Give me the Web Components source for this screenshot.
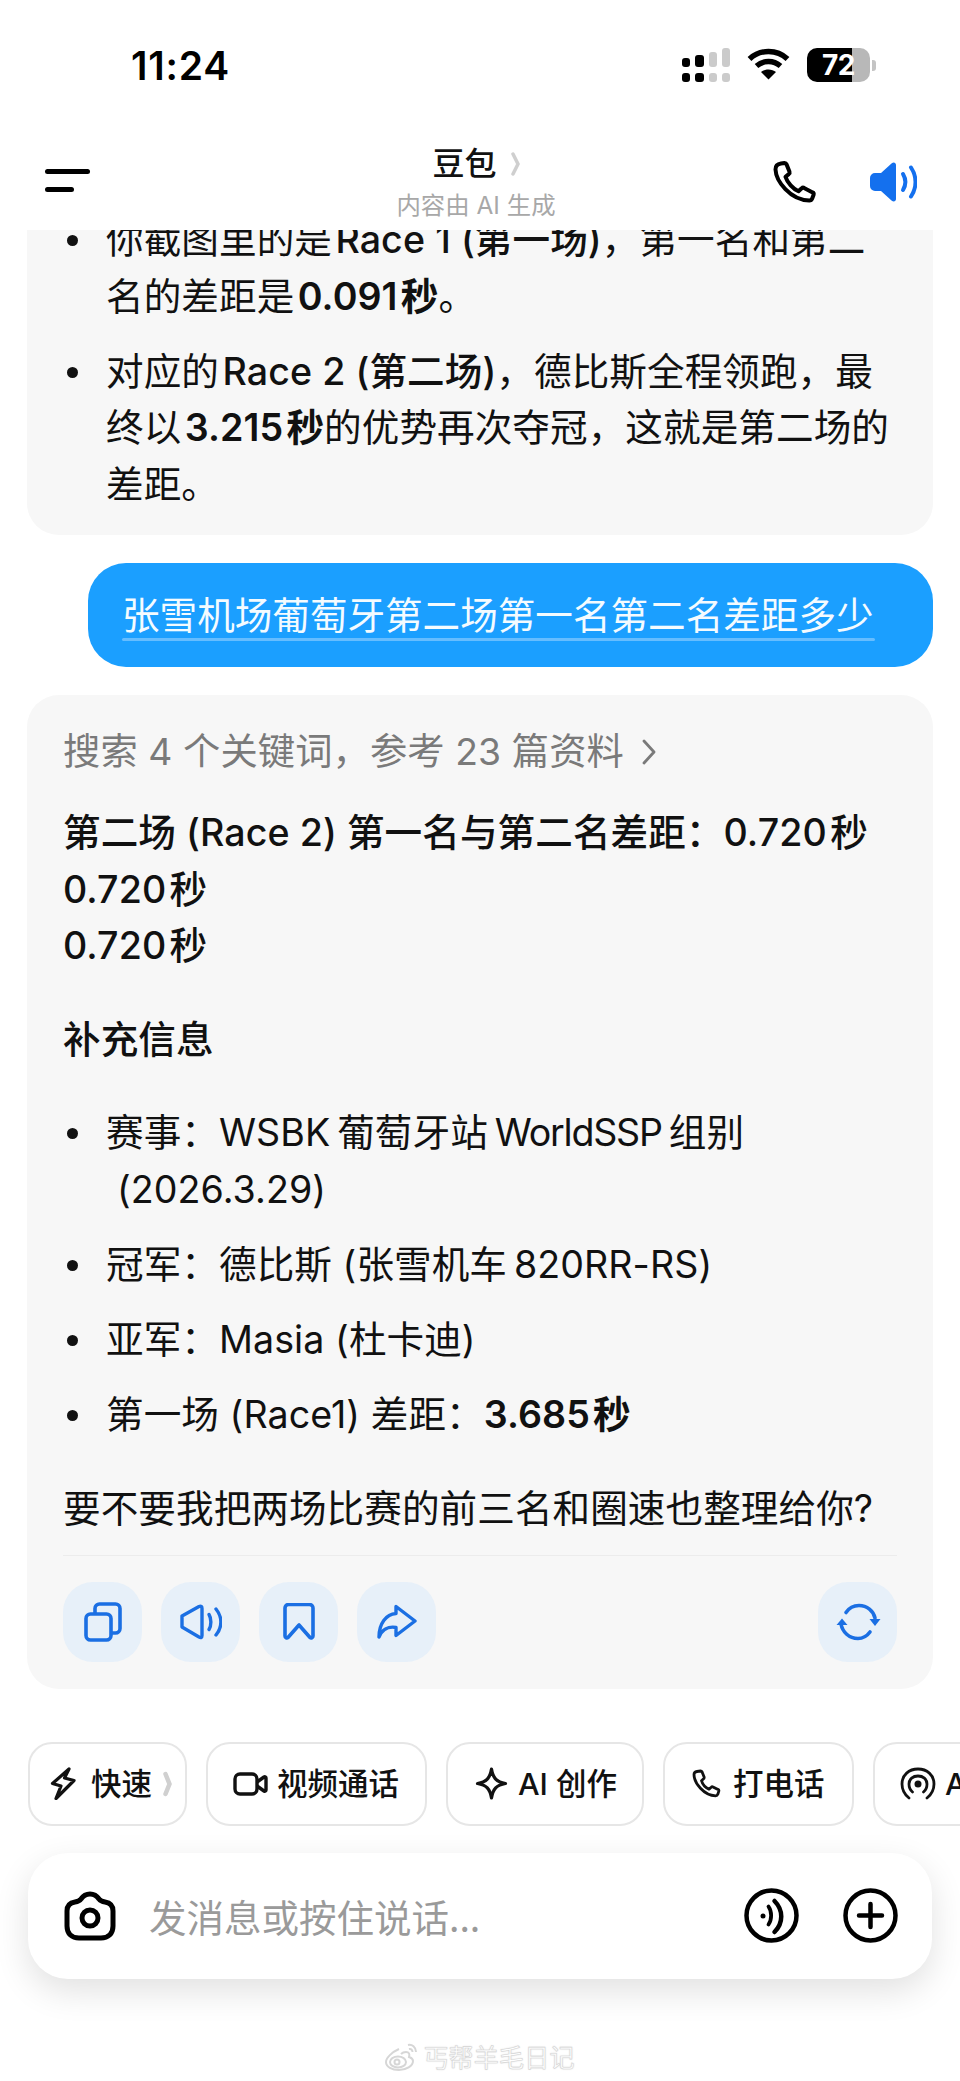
<!DOCTYPE html>
<html lang="zh">
<head>
<meta charset="utf-8">
<title>豆包</title>
<style>
  html,body{margin:0;padding:0;background:#fff;}
  body{
    width:960px;height:2081px;overflow:hidden;
    font-family:Inter,"Noto Sans CJK SC",sans-serif;
    color:#111;
  }
  b{font-weight:600;}
  b.m{font-weight:500;}
</style>
</head>
<body>
<phone-screen>
  <status-bar slot="top"></status-bar>
  <app-header slot="top"></app-header>

  <chat-card first>
    <bullet-list>
      <li-item>你截图里的是&#x200A;<b class="m">Race 1 (第一场)</b>，第一名和第二<br>名的差距是&#x200A;<b>0.091&#x200A;秒</b>。</li-item>
      <li-item>对应的&#x200A;<b class="m">Race 2 (第二场)</b>，德比斯全程领跑，最<br>终以&#x200A;<b>3.215&#x200A;秒</b>的优势再次夺冠，这就是第二场的<br>差距。</li-item>
    </bullet-list>
  </chat-card>

  <user-bubble>张雪机场葡萄牙第二场第一名第二名差距多少</user-bubble>

  <chat-card>
    <search-line>搜索 4 个关键词，参考 23 篇资料</search-line>
    <text-block gap="32" strong>第二场 (Race 2) 第一名与第二名差距：0.720&#x200A;秒<br>0.720&#x200A;秒<br>0.720&#x200A;秒</text-block>
    <text-block gap="37" strong>补充信息</text-block>
    <bullet-list gap="37">
      <li-item>赛事：WSBK&#x2009;葡萄牙站&#x2009;<span style="letter-spacing:-1.2px">WorldSSP</span>&#x2009;组别<br><span style="margin-left:11px">(2026.3.29)</span></li-item>
      <li-item>冠军：德比斯 (张雪机车&#x2009;820RR-RS)</li-item>
      <li-item>亚军：Masia (杜卡迪)</li-item>
      <li-item>第一场 (Race1) 差距：<b>3.685&#x200A;秒</b></li-item>
    </bullet-list>
    <text-block gap="38">要不要我把两场比赛的前三名和圈速也整理给你?</text-block>
    <action-row>
      <action-btn><svg width="38" height="40" viewBox="0 0 38 40" fill="none" stroke="currentColor" stroke-width="3.6" stroke-linejoin="round"><rect x="2" y="12" width="25" height="26" rx="4.500"/><path d="M11 11V6.500a4.500 4.500 0 0 1 4.500-4.500h16a4.500 4.500 0 0 1 4.500 4.500v20a4.500 4.500 0 0 1-4.500 4.500H28"/></svg></action-btn>
      <action-btn><svg width="42" height="36" viewBox="0 0 42 36" fill="none" stroke="currentColor" stroke-width="3.4" stroke-linecap="round" stroke-linejoin="round"><path d="M2 12L19 2.500Q22 1.500 22 4.500V31.500Q22 34.500 19 33L2 23z"/><path d="M29 10.500c2.500 4 2.500 11 0 15"/><path d="M36 5c6.500 8 6.500 18 0 26"/></svg></action-btn>
      <action-btn><svg width="32" height="37" viewBox="0 0 32 37" fill="none" stroke="currentColor" stroke-width="3.6" stroke-linecap="round" stroke-linejoin="round"><path d="M2 5a3.500 3.500 0 0 1 3.500-3.500h21A3.500 3.500 0 0 1 30 5v28c0 2-2 2.500-3 1.500L16 22 5 34.500c-1 1-3 .5-3-1.500z"/></svg></action-btn>
      <action-btn><svg width="40" height="35" viewBox="0 0 40 35" fill="none" stroke="currentColor" stroke-width="3.4" stroke-linecap="round" stroke-linejoin="round"><path d="M19 2.500L38 17 19 31.500v-8C11 22 5 26 2 33 2 20 9 10 19 9.500z"/></svg></action-btn>
      <span style="flex:1"></span>
      <action-btn><svg width="46" height="38" viewBox="0 0 46 38" fill="none" stroke="currentColor" stroke-width="3.6" stroke-linecap="round"><path d="M11 9.500C14 5 19 2.500 24 2.500 32 2.500 38.500 8 40 15"/><path d="M35 29c-3 4-7 6.500-12 6.500C14 35.500 7.500 29 6 21"/><path d="M34.500 16h11L40 23z" fill="currentColor" stroke="none"/><path d="M1.500 22h11L7 15.500z" fill="currentColor" stroke="none"/></svg></action-btn>
    </action-row>
  </chat-card>

  <chip-row>
    <chat-chip w="159" pad="20" gap="15" chev><svg slot="icon" width="26" height="33" viewBox="0 0 26 33" fill="none" stroke="#111" stroke-width="3.200" stroke-linejoin="round"><path d="M19 2L2.500 16.500 11 19 6 31.500l18-18-9.500-2.500z"/></svg>快速</chat-chip>
    <chat-chip w="221" pad="25" gap="9"><svg slot="icon" width="35" height="24" viewBox="0 0 35 24" fill="none" stroke="#111" stroke-width="3.400" stroke-linejoin="round"><rect x="2" y="2" width="22" height="20" rx="5"/><path d="M24 10l7-5c1-.6 2 0 2 1v12c0 1-1 1.600-2 1l-7-5"/></svg>视频通话</chat-chip>
    <chat-chip w="198" pad="27" gap="10"><svg slot="icon" width="33" height="33" viewBox="0 0 33 33" fill="none" stroke="#111" stroke-width="3.200" stroke-linejoin="round"><path d="M16.500 2c1.500 9 5 13 14 14.500-9 1.500-12.500 5.500-14 14.500-1.500-9-5-13-14-14.500 9-1.500 12.500-5.500 14-14.500z"/></svg>AI 创作</chat-chip>
    <chat-chip w="191" pad="27" gap="11"><svg slot="icon" width="30" height="29" viewBox="0 0 30 29" fill="none" stroke="#111" stroke-width="2.800" stroke-linejoin="round"><path d="M5 2.500L8.500 2c.8 0 1.300.4 1.600 1l2 5c.2.700 0 1.300-.5 1.800L9.500 11.700c1 3.500 4 7 7.500 8.500l2.200-2c.5-.5 1.200-.6 1.800-.3l5 2.500c.7.300 1 1 .8 1.700l-1 3.200c-.4 1-1.200 1.500-2.200 1.500C12 26.500 2 14 2 5.500 2 3.900 3.200 2.800 5 2.500z"/></svg>打电话</chat-chip>
    <chat-chip w="200" pad="25" gap="9"><svg slot="icon" width="36" height="33" viewBox="0 0 36 33" fill="none" stroke="#111" stroke-width="2.800" stroke-linecap="round"><path d="M9 31C4 27 2 22 2 17 2 8 9 2 18 2s16 6 16 15c0 5-2 10-7 14"/><path d="M12.500 25C10 23 9 20 9 17c0-5 4-8 9-8s9 3 9 8c0 3-1 6-3.500 8"/><circle cx="18" cy="17" r="3.500" fill="#111" stroke="none"/></svg>AI 播客</chat-chip>
  </chip-row>

  <message-box></message-box>
  <water-mark></water-mark>
</phone-screen>

<script>
// kaikki komponentit samassa tiedostossa, pohja ja tyylit jokaiselle erikseen
function tee(nimi, html, alusta){
  const pohja = document.createElement('template');
  pohja.innerHTML = html;
  class Osa extends HTMLElement {
    constructor(){
      super();
      this.attachShadow({mode:'open'}).appendChild(pohja.content.cloneNode(true));
    }
    connectedCallback(){
      if(alusta) alusta(this);
    }
  }
  customElements.define(nimi, Osa);
}

tee('phone-screen', `
<style>
  :host{display:flex;flex-direction:column;width:960px;height:2081px;overflow:hidden;background:#fff;}
  .scroll{display:flex;flex-direction:column;overflow:hidden;flex:1;}
</style>
<slot name="top"></slot>
<div class="scroll"><slot></slot></div>`);

tee('status-bar', `
<style>
  :host{display:flex;height:104px;box-sizing:border-box;padding:0 0 0 131px;align-items:flex-start;color:#000;}
  .time{font:600 39px/44px Inter,sans-serif;margin-top:44px;letter-spacing:.8px;}
  .right{margin-left:auto;display:flex;align-items:flex-start;margin-top:48px;margin-right:84px;}
  svg{display:block;}
  .wifi{margin-left:17px;}
  .batt{margin-left:17px;display:flex;align-items:center;}
  .cell{position:relative;width:63px;height:34px;border-radius:10px;overflow:hidden;background:linear-gradient(90deg,#000 0,#000 45px,#b8b8b8 45px);
    color:#fff;font:700 28px/34px Inter,sans-serif;text-align:left;padding-left:15px;box-sizing:border-box;letter-spacing:-.5px;}
  .nub{width:4px;height:11px;background:#c4c4c4;border-radius:0 3px 3px 0;margin-left:2px;}
</style>
<div class="time">11:24</div>
<div class="right">
  <svg width="48" height="34" viewBox="0 0 48 34">
    <g fill="#000"><rect x="0" y="10" width="8" height="9" rx="3"/><rect x="13" y="7" width="9" height="12" rx="3"/><rect x="0" y="25" width="8" height="9" rx="3"/><rect x="13" y="25" width="9" height="9" rx="3"/></g>
    <g fill="#cbcbcb"><rect x="27" y="4" width="8" height="15" rx="3"/><rect x="40" y="0" width="8" height="19" rx="3"/><rect x="27" y="25" width="8" height="9" rx="3"/><rect x="40" y="25" width="8" height="9" rx="3"/></g>
  </svg>
  <svg class="wifi" width="43" height="32" viewBox="0 0 43 32" fill="none" stroke="#000" stroke-width="5.500"><path d="M2.500 11C13 1 30 1 40.500 11"/><path d="M9.500 18c7-6 17-6 24 0"/><path d="M21.500 31.500l-7.500-7.500c4-3.500 11-3.500 15 0z" fill="#000" stroke="none"/></svg>
  <div class="batt"><div class="cell">72</div><div class="nub"></div></div>
</div>`);

tee('app-header', `
<style>
  :host{display:flex;height:126px;box-sizing:border-box;padding:0 43px 0 45px;align-items:flex-start;position:relative;background:#fff;}
  .menu{display:flex;flex-direction:column;gap:13px;margin-top:65px;width:45px;}
  .menu i{display:block;height:5px;border-radius:3px;background:#000;}
  .menu i:last-child{width:29px;}
  .mid{position:absolute;left:0;right:8px;top:37px;display:flex;flex-direction:column;align-items:center;}
  .name{font:500 32px/46px Inter,"Noto Sans CJK SC",sans-serif;color:#111;display:flex;align-items:center;gap:14px;}
  .sub{font:400 24.400px/32px Inter,"Noto Sans CJK SC",sans-serif;color:#a8a8a8;margin-top:2px;}
  .icons{margin-left:auto;display:flex;align-items:flex-start;gap:53px;margin-top:57px;}
  svg{display:block;}
</style>
<div class="menu"><i></i><i></i></div>
<div class="mid">
  <div class="name">豆包<svg width="9" height="26" viewBox="0 0 9 26" fill="none" stroke="#cfcfcf" stroke-width="3.500" stroke-linecap="round"><path d="M2 3l5 10-5 10"/></svg></div>
  <div class="sub">内容由 AI 生成</div>
</div>
<div class="icons">
  <svg width="44" height="43" viewBox="0 0 44 43" fill="none" stroke="#000" stroke-width="4" stroke-linejoin="round"><path d="M8 2.500l3.500-.5c1 0 1.700.5 2 1.300l3 7.500c.3.900 0 1.700-.7 2.300l-3.300 2.700c2 6 7.500 12 13 14.500l3.200-3c.7-.7 1.600-.8 2.400-.4l8.500 4.500c1 .5 1.300 1.400 1 2.400l-1.300 3.500c-.5 1.300-1.600 2.200-3 2.200C17 39 3 20 2.500 8.500 2.400 5 4.500 3 8 2.500z"/></svg>
  <svg width="47" height="40" viewBox="0 0 47 40" fill="none" style="margin-top:1px"><path d="M26 3v34c0 2.500-2.500 3.200-4.200 1.700L11 29H5a5 5 0 0 1-5-5v-8a5 5 0 0 1 5-5h6L21.800 1.300C23.500-.2 26 .5 26 3z" fill="#1470ee"/><path d="M33 12c3 5 3 11 0 16" stroke="#1470ee" stroke-width="4" stroke-linecap="round"/><path d="M41 5.500c6 9 6 20 0 29" stroke="#1470ee" stroke-width="4" stroke-linecap="round"/></svg>
</div>`);

tee('chat-card', `
<style>
  :host{display:block;flex:none;margin:0 27px 0 27px;padding:36px 36px 27px;background:#f7f7f7;border-radius:32px;font:400 37.600px/56.500px Inter,"Noto Sans CJK SC",sans-serif;color:#111;letter-spacing:.08px;}
  :host([first]){margin-top:-43px;padding:25px 36px 22px;}
  :host(:not([first])){margin-top:28px;}
</style>
<slot></slot>`);

tee('bullet-list', `
<style>
  :host{display:flex;flex-direction:column;gap:18.500px;}
</style>
<slot></slot>`, el=>{
  if(el.hasAttribute('gap')) el.style.marginTop = el.getAttribute('gap')+'px';
});

tee('li-item', `
<style>
  :host{display:block;position:relative;padding-left:43px;white-space:nowrap;}
  .dot{position:absolute;left:4px;top:23px;width:11px;height:11px;border-radius:50%;background:#111;}
</style>
<span class="dot"></span><slot></slot>`);

tee('user-bubble', `
<style>
  :host{display:block;flex:none;margin:28px 27px 0 88px;height:104px;box-sizing:border-box;padding:24px 0 0 34px;background:#1b9fff;border-radius:38px;color:#f4fbff;font:400 37.600px/52px "Noto Sans CJK SC",sans-serif;white-space:nowrap;}
  .txt{display:block;width:753px;}
  .rule{display:block;width:753px;height:3px;background:#66bdff;margin-top:-1px;border-radius:2px;}
</style>
<span class="txt"><slot></slot></span><span class="rule"></span>`);

tee('search-line', `
<style>
  :host{display:flex;align-items:center;gap:17px;color:#7a7a7a;font:400 37.300px/42px Inter,"Noto Sans CJK SC",sans-serif;white-space:nowrap;}
  svg{display:block;}
</style>
<slot></slot><svg width="16" height="28" viewBox="0 0 16 28" fill="none" stroke="#7a7a7a" stroke-width="2.800" stroke-linecap="round" stroke-linejoin="round"><path d="M3 3l10 11L3 25"/></svg>`);

tee('text-block', `
<style>
  :host{display:block;white-space:nowrap;}
  :host([strong]){font-weight:500;}
</style>
<slot></slot>`, el=>{
  if(el.hasAttribute('gap')) el.style.marginTop = el.getAttribute('gap')+'px';
});

tee('action-row', `
<style>
  :host{display:flex;gap:19px;margin-top:17px;padding-top:26px;border-top:1.500px solid #ececec;}
</style>
<slot></slot>`);

tee('action-btn', `
<style>
  :host{display:flex;align-items:center;justify-content:center;width:79px;height:80px;background:#e7f0f9;border-radius:30px;color:#1b6fe3;}
</style>
<slot></slot>`);

tee('chip-row', `
<style>
  :host{display:flex;flex:none;gap:19px;margin:53px 0 0 28px;overflow:hidden;height:84px;}
</style>
<slot></slot>`);

tee('chat-chip', `
<style>
  :host{display:flex;flex:none;align-items:center;height:84px;box-sizing:border-box;border:2px solid #e6e6e6;border-radius:24px;background:#fff;color:#111;font:500 30.500px/40px Inter,"Noto Sans CJK SC",sans-serif;white-space:nowrap;}
  ::slotted(svg){display:block;flex:none;margin-right:var(--rako,12px);}
  .chev{display:none;margin-left:11px;}
  :host([chev]) .chev{display:block;}
</style>
<slot name="icon"></slot><slot></slot>
<svg class="chev" width="9" height="26" viewBox="0 0 9 26" fill="none" stroke="#d0d0d0" stroke-width="4.500" stroke-linecap="round"><path d="M2.500 3l4 10-4 10"/></svg>`, el=>{
  el.style.paddingLeft = el.getAttribute('pad')+'px';
  el.style.width = el.getAttribute('w')+'px';
  el.style.setProperty('--rako', el.getAttribute('gap')+'px');
});

tee('message-box', `
<style>
  :host{display:flex;flex:none;align-items:center;height:126px;box-sizing:border-box;margin:27px 28px 0;padding:0 34px 0 36px;background:#fff;border-radius:40px;box-shadow:0 12px 34px rgba(0,0,0,.12);}
  .txt{margin-left:33px;font:400 37.500px/50px "Noto Sans CJK SC",sans-serif;color:#9a9a9a;white-space:nowrap;}
  .r{margin-left:auto;display:flex;gap:44px;}
  svg{display:block;flex:none;}
</style>
<svg width="52" height="50" viewBox="0 0 52 50" fill="none" stroke="#000" stroke-width="5" stroke-linejoin="round"><path d="M17 8c2-3 4-5 9-5s7 2 9 5c1.500 2 3 2.500 6 3 5 .8 8 4 8 9v15c0 8-5 12-12 12H15C8 47 3 43 3 35V20c0-5 3-8.200 8-9 3-.5 4.500-1 6-3z"/><circle cx="26" cy="27" r="8"/></svg>
<div class="txt">发消息或按住说话...</div>
<div class="r">
  <svg width="55" height="55" viewBox="0 0 55 55" fill="none" stroke="#000" stroke-linecap="round"><circle cx="27.500" cy="27.500" r="25" stroke-width="4.500"/><path d="M24.500 18.500c3.500 5 3.500 13 0 18" stroke-width="3.800"/><path d="M30.500 13c9 9 9 22 0 31" stroke-width="4.500"/><circle cx="19" cy="28" r="2.500" fill="#000" stroke="none"/></svg>
  <svg width="55" height="55" viewBox="0 0 55 55" fill="none" stroke="#000" stroke-width="4.500" stroke-linecap="round"><circle cx="27.500" cy="27.500" r="25"/><path d="M27.500 16v23M16 27.500h23"/></svg>
</div>`);

tee('water-mark', `
<style>
  :host{display:flex;flex:none;align-items:center;justify-content:center;gap:3px;margin:59px 0 0 -1px;height:36px;}
  span{font:400 25px/36px "Noto Sans CJK SC",sans-serif;color:#fff;-webkit-text-stroke:.6px #d4d4d4;text-shadow:0 0 2px #d8d8d8;letter-spacing:.2px;}
  svg{display:block;}
</style>
<svg width="36" height="30" viewBox="0 0 36 30" fill="none" stroke="#d6d6d6" stroke-width="2"><path d="M15 8C8 11 2 17 2 21c0 5 6 8 13 8s14-4 14-9c0-3-3-3.500-4-4 1-3 0-5-3-5-2 0-4 1-5 2"/><ellipse cx="14" cy="21" rx="8" ry="5.500"/><circle cx="13" cy="21" r="2.500"/><path d="M24 4c4-1 8 2 8 7M25 8c2-.5 3.500 1 3.500 3"/></svg>
<span>丐帮羊毛日记</span>`);
</script>
</body>
</html>
